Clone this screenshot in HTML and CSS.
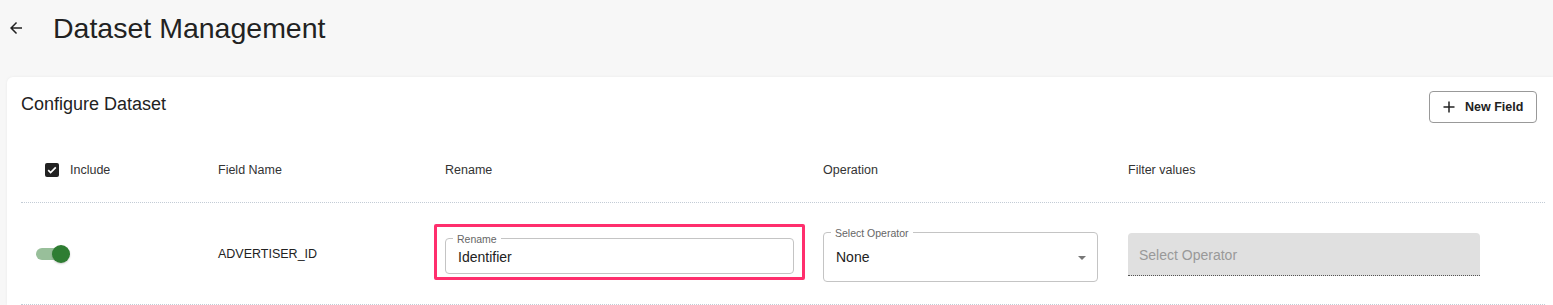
FILE: index.html
```html
<!DOCTYPE html>
<html lang="en">
  <head>
    <meta charset="UTF-8" />
    <title>Dataset Management</title>
    <link rel="stylesheet" href="styles.css">
  </head>
  <body>
    <div class="topbar">
      <svg class="back" viewBox="0 0 24 24" width="18" height="18">
        <path d="M20 11H7.83l5.59-5.59L12 4l-8 8 8 8 1.41-1.41L7.83 13H20v-2z" fill="#222" />
      </svg>
      <h1>Dataset Management</h1>
    </div>

    <div class="card">
      <div class="card-head">
        <h2>Configure Dataset</h2>
        <button class="new-field">
          <svg viewBox="0 0 12 12" width="12" height="12">
            <path d="M6 0.5v11M0.5 6h11" stroke="#222" stroke-width="1.5" fill="none" />
          </svg>
          New Field
        </button>
      </div>

      <div class="table">
        <div class="row head">
          <div class="cell include">
            <span class="checkbox">
              <svg viewBox="0 0 14 14" width="14" height="14">
                <path d="M3.2 7.2l2.4 2.4 5.2-5.2" stroke="#fff" stroke-width="1.7" fill="none" />
              </svg>
            </span>
            Include
          </div>
          <div class="cell">Field Name</div>
          <div class="cell">Rename</div>
          <div class="cell">Operation</div>
          <div class="cell">Filter values</div>
        </div>

        <div class="row body-row">
          <div class="cell toggle-cell">
            <span class="switch"><span class="track"></span><span class="thumb"></span></span>
          </div>
          <div class="cell field-name">ADVERTISER_ID</div>
          <div class="cell">
            <div class="highlight">
              <fieldset class="outlined rename">
                <legend>Rename</legend>
                <input type="text" value="Identifier" />
              </fieldset>
            </div>
          </div>
          <div class="cell">
            <fieldset class="outlined select">
              <legend>Select Operator</legend>
              <div class="select-value">
                <span>None</span>
                <span class="caret"></span>
              </div>
            </fieldset>
          </div>
          <div class="cell">
            <div class="disabled-field">Select Operator</div>
          </div>
        </div>
      </div>
    </div>
  </body>
</html>
```

FILE: styles.css
```css
body {
  margin: 0;
  background-color: #f7f7f7;
  font-family: "Liberation Sans", Arial, sans-serif;
  color: #222;
}
.topbar {
  display: flex;
  align-items: center;
  height: 56px;
  padding-left: 7px;
}
.topbar .back {
  display: block;
}
.topbar h1 {
  margin: 0 0 0 28px;
  font-size: 28.5px;
  font-weight: 400;
  color: #222;
}
.card {
  margin: 21px 0 0 7px;
  background-color: white;
  border-radius: 6px 0 0 0;
  padding: 14px 16px 0 14px;
  box-shadow: 0 0 3px rgba(0, 0, 0, 0.06);
}
.card-head {
  display: flex;
  justify-content: space-between;
  align-items: flex-start;
}
.card-head h2 {
  margin: 1px 0 0 0;
  font-size: 18px;
  line-height: 24px;
  font-weight: 400;
  color: #222;
}
.new-field {
  display: flex;
  align-items: center;
  gap: 10px;
  box-sizing: border-box;
  width: 108px;
  height: 32px;
  padding: 0 0 0 13px;
  background-color: white;
  border: 1px solid #999;
  border-radius: 4px;
  font-family: "Liberation Sans", Arial, sans-serif;
  font-size: 12.5px;
  font-weight: 700;
  color: #222;
}
.table {
  margin: 15px -8px 0 0;
}
.row {
  display: grid;
  grid-template-columns: 197px 227px 378px 305px 1fr;
  align-items: center;
  height: 101px;
  border-bottom: 1px dotted #c3ccd6;
}
.row.head {
  height: 64px;
  font-size: 12.5px;
  color: #333;
}
.row.body-row {
  box-sizing: border-box;
  height: 102px;
  padding-bottom: 4px;
}
.cell.include {
  display: flex;
  align-items: center;
  gap: 11px;
  padding-left: 24px;
}
.checkbox {
  display: block;
  width: 14px;
  height: 14px;
  background-color: #222;
  border-radius: 2px;
}
.checkbox svg {
  display: block;
}
.toggle-cell {
  margin-top: 4px;
  padding-left: 15px;
}
.switch {
  display: flex;
  align-items: center;
}
.track {
  width: 28px;
  height: 12px;
  border-radius: 6px;
  background-color: #98bf9a;
}
.thumb {
  width: 18px;
  height: 18px;
  margin-left: -12px;
  border-radius: 50%;
  background-color: #2e7d32;
  box-shadow: 0 1px 2px rgba(0, 0, 0, 0.2);
}
.field-name {
  margin-top: 4px;
  font-size: 12.5px;
  color: #222;
}
.highlight {
  box-sizing: border-box;
  width: 371px;
  margin-left: -11px;
  padding: 6px 8px 3px 8px;
  border: 3px solid #ff2f6d;
  border-radius: 2px;
}
.outlined {
  margin: 0;
  border: 1px solid #c4c4c4;
  border-radius: 4px;
  font-size: 14px;
}
.outlined legend {
  margin-left: -5px;
  padding: 0 4px;
  font-size: 10.5px;
  line-height: 12px;
  color: #666;
}
.rename {
  padding: 2px 12px 6px 12px;
}
.rename input {
  display: block;
  width: 100%;
  height: 20px;
  padding: 0;
  border: none;
  outline: none;
  background: transparent;
  font-family: "Liberation Sans", Arial, sans-serif;
  font-size: 14px;
  color: #222;
}
.select {
  box-sizing: border-box;
  width: 275px;
  margin-top: 5px;
  padding: 8px 11px 14px 12px;
}
.select-value {
  display: flex;
  justify-content: space-between;
  align-items: center;
  height: 20px;
  color: #222;
}
.caret {
  width: 0;
  height: 0;
  border-left: 4px solid transparent;
  border-right: 4px solid transparent;
  border-top: 4px solid #777;
  margin-top: 3px;
}
.disabled-field {
  display: flex;
  align-items: center;
  box-sizing: border-box;
  width: 352px;
  height: 43px;
  margin-top: 5px;
  padding-left: 11px;
  padding-top: 2px;
  background-color: #e0e0e0;
  border-bottom: 1px dotted #555;
  border-radius: 4px 4px 0 0;
  font-size: 14px;
  color: #999;
}
```
